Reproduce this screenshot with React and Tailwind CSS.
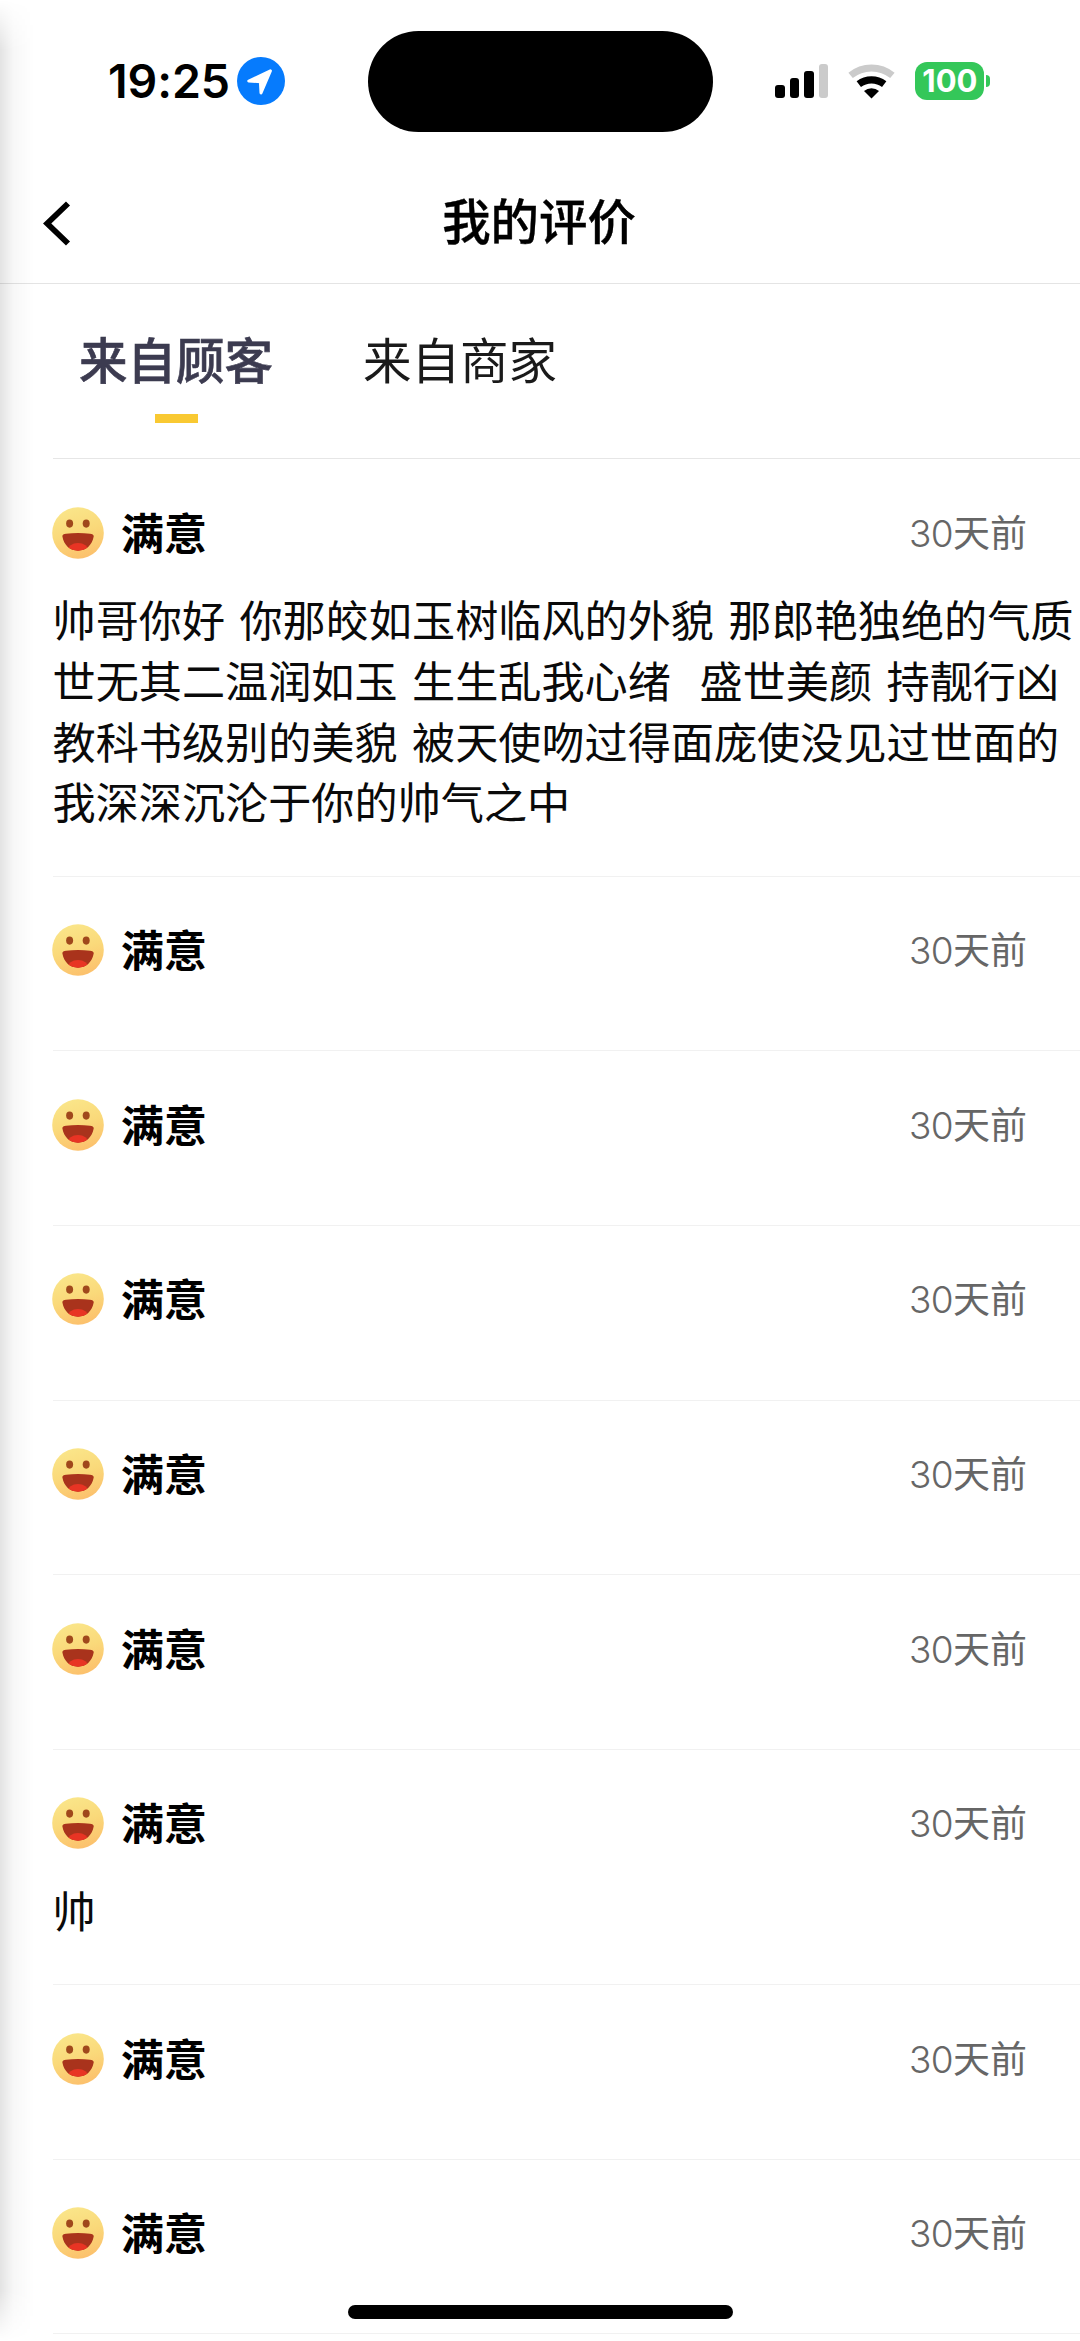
import React from "react";

const LONG_REVIEW = [
  "帅哥你好 你那皎如玉树临风的外貌 那郎艳独绝的气质",
  "世无其二温润如玉 生生乱我心绪  盛世美颜 持靓行凶",
  "教科书级别的美貌 被天使吻过得面庞使没见过世面的",
  "我深深沉沦于你的帅气之中",
];

const REVIEWS = [LONG_REVIEW, [], [], [], [], [], ["帅"], [], []];

function LocationBadge() {
  return (
    <svg className="ml-[8px] h-[48px] w-[48px]" viewBox="0 0 48 48">
      <circle cx="24" cy="24" r="24" fill="#067bfd" />
      <path d="M33.4 13.8 L11.8 24 L23.4 24.8 L24 36 Z" fill="#fff" stroke="#fff" strokeWidth="3" strokeLinejoin="round" />
    </svg>
  );
}

function Wifi() {
  return (
    <svg className="ml-[20px] h-[35px] w-[47px]" viewBox="0 0 47 35">
      <path d="M2.6 11.4 A33 33 0 0 1 44.4 11.4" fill="none" stroke="#cbcbcb" strokeWidth="7" />
      <path d="M10.8 20.2 A21 21 0 0 1 36.2 20.2" fill="none" stroke="#000" strokeWidth="7.2" />
      <path d="M23.5 34.5 L16 27 A11.5 11.5 0 0 1 31 27 Z" fill="#000" />
    </svg>
  );
}

function StatusBar() {
  return (
    <div className="flex h-[162px] items-center">
      <div className="flex w-[368px] items-center pl-[108px]">
        <span className="w-[121px] whitespace-nowrap font-['Inter'] text-[46.5px] font-semibold leading-none tracking-[-0.1px]">19:25</span>
        <LocationBadge />
      </div>
      <div className="h-[101px] w-[345px] rounded-full bg-black" />
      <div className="ml-[62px] flex h-[34px] items-end gap-[5px]">
        <div className="h-[13px] w-[9.6px] rounded-[3px] bg-black" />
        <div className="h-[20px] w-[9.6px] rounded-[3px] bg-black" />
        <div className="h-[27px] w-[9.6px] rounded-[3px] bg-black" />
        <div className="h-[34px] w-[9.6px] rounded-[3px] bg-[#cbcbcb]" />
      </div>
      <Wifi />
      <div className="ml-[20px] flex h-[38px] w-[69px] items-center justify-center rounded-[12px] bg-[#34c759] pb-px font-['Inter'] text-[31px] font-bold leading-none text-white">100</div>
      <div className="ml-[2px] h-[12px] w-[4px] rounded-r-full bg-[#34c759]" />
    </div>
  );
}

function Header() {
  return (
    <div className="grid h-[122px] grid-cols-[1fr_auto_1fr] items-center border-b border-[#e4e4e4]">
      <svg className="ml-[42px] h-[48px] w-[30px]" viewBox="0 0 30 48">
        <path d="M26 4.5 L5.2 24.5 L26 44.5" fill="none" stroke="#000" strokeWidth="5.8" />
      </svg>
      <h1 className="mb-[7px] mr-[2px] text-[48.4px] font-medium leading-none [-webkit-text-stroke:0.4px]">我的评价</h1>
      <span />
    </div>
  );
}

function Tabs() {
  return (
    <div className="ml-[53px] flex h-[175px] gap-[90px] border-b border-[#e6e6e6] pl-[26px] pt-[49px] text-[48.5px] leading-[50px]">
      <div className="flex flex-col items-center">
        <span className="font-medium text-[#3c3b50] [-webkit-text-stroke:0.6px]">来自顾客</span>
        <div className="mt-[31px] h-[9px] w-[43px] bg-[#f9c932]" />
      </div>
      <span className="text-[#1a1a1a]">来自商家</span>
    </div>
  );
}

function Smiley() {
  return (
    <svg className="-ml-px h-[52px] w-[52px]" viewBox="0 0 52 52">
      <defs>
        <linearGradient id="face" x1="0.3" y1="0" x2="0.6" y2="1">
          <stop offset="0" stopColor="#fae68a" />
          <stop offset="0.5" stopColor="#fad97a" />
          <stop offset="1" stopColor="#fcc06c" />
        </linearGradient>
        <clipPath id="mouth">
          <path d="M10.4 29.6 C10.2 27.6 11.5 26.9 14 26.7 Q26 25.4 38 26.7 C40.5 26.9 41.9 27.6 41.7 29.6 C40 38.5 34 43.7 26 43.7 C18 43.7 12 38.5 10.4 29.6 Z" />
        </clipPath>
      </defs>
      <circle cx="26" cy="26" r="25.8" fill="url(#face)" />
      <ellipse cx="17.6" cy="16.6" rx="3.5" ry="4.1" fill="#a0481c" />
      <ellipse cx="34.2" cy="16.6" rx="3.5" ry="4.1" fill="#a0481c" />
      <g clipPath="url(#mouth)">
        <rect x="9" y="25" width="34" height="20" fill="#a9331c" />
        <ellipse cx="26" cy="43.5" rx="10.5" ry="7.5" fill="#e83424" />
      </g>
    </svg>
  );
}

function Review({ lines }) {
  return (
    <div className="ml-[53px] border-b border-[#f1f1f1] pb-[44.6px]">
      <div className="flex h-[129px] items-center pr-[53px] pt-[18px]">
        <Smiley />
        <span className="mb-[3px] ml-[17px] text-[43px] font-bold leading-none">满意</span>
        <span className="mb-px ml-auto text-[37px] leading-none text-[#666]">
          <span className="font-['Inter'] text-[37px] font-light tracking-[-0.6px]">30</span>天前
        </span>
      </div>
      {lines.map((line) => (
        <p key={line} className="-ml-[0.5px] h-[60.8px] whitespace-pre text-[43.15px] leading-[60.8px] text-[#0a0a0a] [word-spacing:4.7px]">
          {line}
        </p>
      ))}
    </div>
  );
}

export default function App() {
  return (
    <div className="relative h-[2341px] w-[1080px] overflow-hidden bg-white font-['Noto_Sans_CJK_SC',sans-serif] text-black">
      <StatusBar />
      <Header />
      <Tabs />
      {REVIEWS.map((lines, i) => (
        <Review key={i} lines={lines} />
      ))}
      <div className="absolute inset-y-0 left-0 w-[34px] bg-linear-to-r from-black/11 via-black/3 via-40% to-transparent mask-[linear-gradient(to_bottom,transparent,black_50px,black_calc(100%-50px),transparent)]" />
      <div className="absolute bottom-[22px] left-[348px] h-[14px] w-[385px] rounded-full bg-black" />
    </div>
  );
}
